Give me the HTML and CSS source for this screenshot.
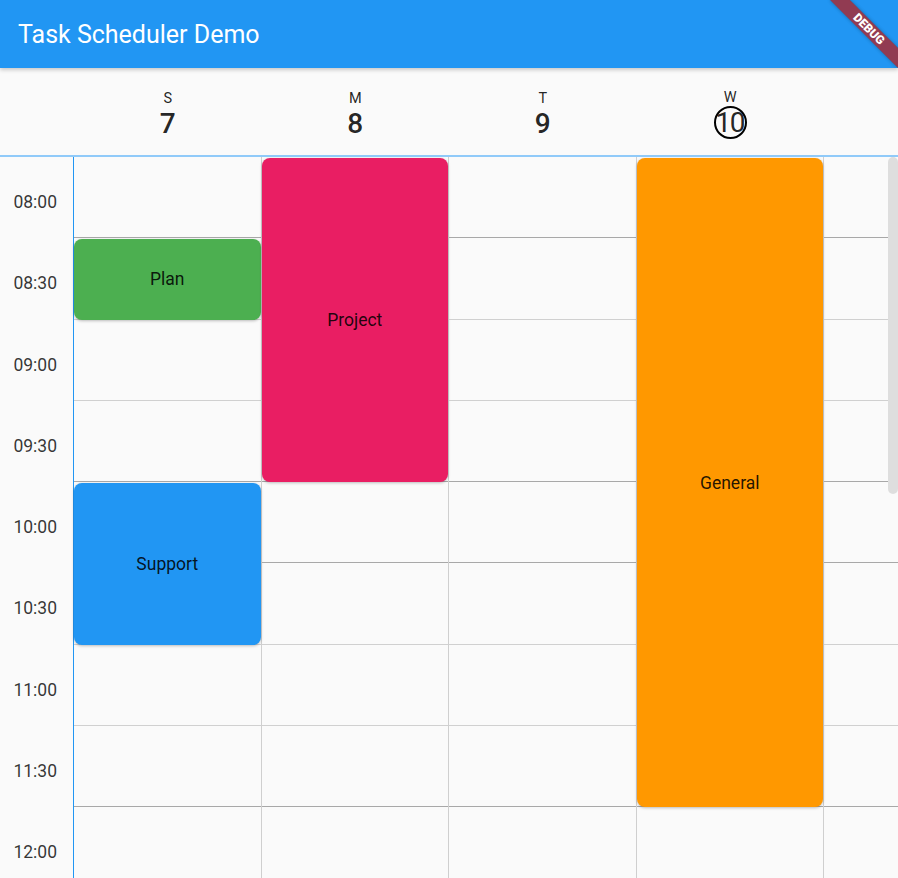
FILE: index.html
```html
<!DOCTYPE html>
<html>
<head>
  <title>Task Scheduler Demo</title>
  <link rel="stylesheet" href="styles.css">
</head>
<body>
  <header class="appbar">
    <h1 class="title">Task Scheduler Demo</h1>
    <div class="banner">DEBUG</div>
  </header>

  <div class="days">
    <div class="corner"></div>
    <div class="day"><span class="dow">S</span><span class="date">7</span></div>
    <div class="day"><span class="dow">M</span><span class="date">8</span></div>
    <div class="day"><span class="dow">T</span><span class="date">9</span></div>
    <div class="day"><span class="dow">W</span><span class="date today">10</span></div>
    <div class="day"></div>
  </div>

  <div class="schedule">
    <div class="times">
      <div class="time">08:00</div>
      <div class="time">08:30</div>
      <div class="time">09:00</div>
      <div class="time">09:30</div>
      <div class="time">10:00</div>
      <div class="time">10:30</div>
      <div class="time">11:00</div>
      <div class="time">11:30</div>
      <div class="time">12:00</div>
    </div>

    <div class="col">
      <div class="slot dark"></div><div class="slot"></div><div class="slot"></div><div class="slot dark"></div>
      <div class="slot dark"></div><div class="slot"></div><div class="slot"></div><div class="slot dark"></div><div class="slot"></div>
      <div class="task green" style="top: calc(81.25px * 1 + 1px); height: calc(81.25px * 1 - 1px);">Plan</div>
      <div class="task blue" style="top: calc(81.25px * 4 + 1px); height: calc(81.25px * 2 - 1px);">Support</div>
    </div>

    <div class="col">
      <div class="slot dark"></div><div class="slot"></div><div class="slot"></div><div class="slot dark"></div>
      <div class="slot dark"></div><div class="slot"></div><div class="slot"></div><div class="slot dark"></div><div class="slot"></div>
      <div class="task pink" style="top: 1px; height: calc(81.25px * 4 - 1px);">Project</div>
    </div>

    <div class="col">
      <div class="slot dark"></div><div class="slot"></div><div class="slot"></div><div class="slot dark"></div>
      <div class="slot dark"></div><div class="slot"></div><div class="slot"></div><div class="slot dark"></div><div class="slot"></div>
    </div>

    <div class="col">
      <div class="slot dark"></div><div class="slot"></div><div class="slot"></div><div class="slot dark"></div>
      <div class="slot dark"></div><div class="slot"></div><div class="slot"></div><div class="slot dark"></div><div class="slot"></div>
      <div class="task orange" style="top: 1px; height: calc(81.25px * 8 - 1px);">General</div>
    </div>

    <div class="col">
      <div class="slot dark"></div><div class="slot"></div><div class="slot"></div><div class="slot dark"></div>
      <div class="slot dark"></div><div class="slot"></div><div class="slot"></div><div class="slot dark"></div><div class="slot"></div>
    </div>

    <div class="scrollbar"></div>
  </div>
</body>
</html>
```

FILE: styles.css
```css
body {
  margin: 0;
  width: 898px;
  height: 878px;
  overflow: hidden;
  background: #fafafa;
  font-family: Roboto, "Liberation Sans", sans-serif;
  color: rgba(0, 0, 0, 0.87);
}

.appbar {
  position: relative;
  z-index: 2;
  height: 68px;
  background-color: #2196F3;
  box-shadow: 0 2px 4px rgba(0, 0, 0, 0.2);
  display: flex;
  align-items: center;
  padding-left: 18px;
  overflow: hidden;
}
.title {
  margin: 0;
  font-size: 25px;
  font-weight: 400;
  color: white;
}

/* flutter-style debug ribbon in the top right corner */
.banner {
  position: absolute;
  left: 821px;
  top: 22px;
  width: 96px;
  height: 14px;
  line-height: 14px;
  transform: rotate(45deg);
  background: rgba(183, 28, 28, 0.75);
  box-shadow: 0 0 4px rgba(0, 0, 0, 0.3);
  color: white;
  font-size: 12px;
  font-weight: 900;
  text-align: center;
}

.days {
  display: grid;
  grid-template-columns: 74px repeat(5, 187.5px);
  height: 87px;
  border-bottom: 2px solid #90CAF9;
}
.day {
  display: flex;
  flex-direction: column;
  align-items: center;
  justify-content: center;
  padding-top: 4px;
}
.dow {
  font-size: 14.5px;
  line-height: 17px;
}
.date {
  font-size: 28px;
  font-weight: 500;
  line-height: 29px;
  margin-top: 2px;
}
.today {
  width: 29px;
  height: 29px;
  line-height: 30px;
  margin-top: 0;
  font-weight: 400;
  text-align: center;
  border: 2px solid black;
  border-radius: 50%;
  letter-spacing: -1.5px;
  text-indent: -1px;
}

.schedule {
  position: relative;
  display: grid;
  grid-template-columns: 74px repeat(5, 187.5px);
  height: 721px;
  overflow: hidden;
}
.times {
  border-right: 1px solid #2196F3;
}
.time {
  height: 81.25px;
  box-sizing: border-box;
  padding-top: 34px;
  padding-right: 16px;
  text-align: right;
  font-size: 17.5px;
  line-height: 22px;
  color: rgba(0, 0, 0, 0.8);
}
.col {
  position: relative;
  border-right: 1px solid #cfcfcf;
}
.slot {
  height: 81.25px;
  box-sizing: border-box;
  border-bottom: 1px solid #d0d0d0;
}
.slot.dark {
  border-bottom-color: #a8a8a8;
}

.task {
  position: absolute;
  left: 0;
  right: 0;
  border-radius: 8px;
  display: flex;
  align-items: center;
  justify-content: center;
  font-size: 17.5px;
  color: rgba(0, 0, 0, 0.87);
  box-shadow: 0 1px 3px rgba(0, 0, 0, 0.25);
}
.green { background-color: #4CAF50; }
.blue { background-color: #2196F3; }
.pink { background-color: #E91E63; }
.orange { background-color: #FF9800; }

.scrollbar {
  position: absolute;
  top: 0;
  right: 0;
  width: 10px;
  height: 337px;
  border-radius: 5px;
  background: #dedede;
}
```
